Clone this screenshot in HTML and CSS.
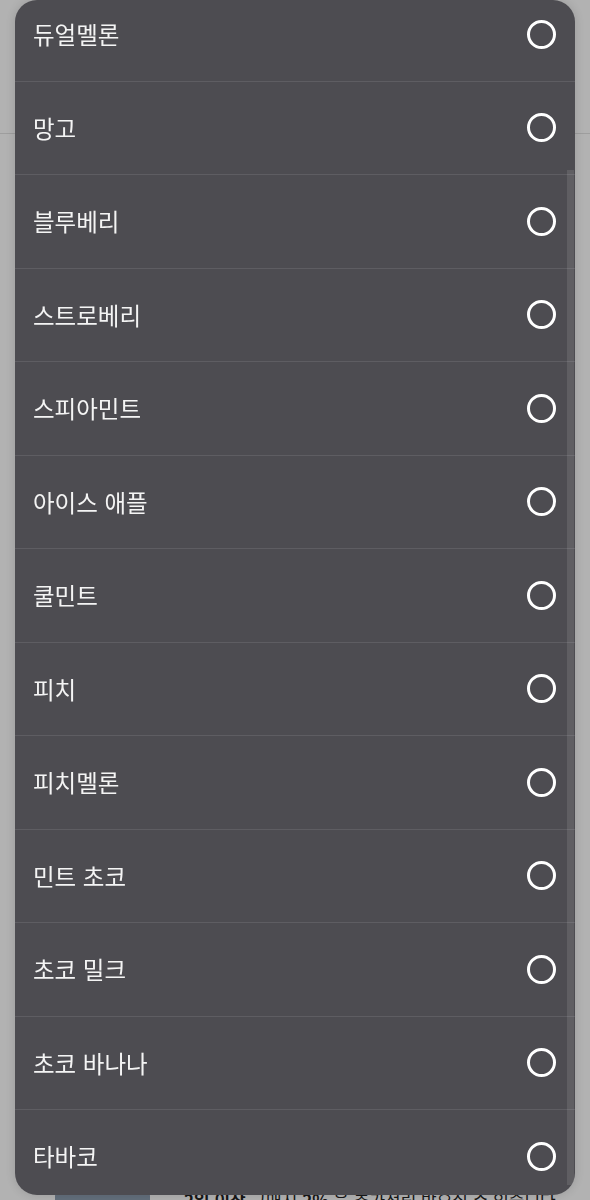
FILE: index.html
```html
<!DOCTYPE html>
<html lang="ko">
<head>
  <meta charset="UTF-8">
  <title>맛 선택</title>
  <link rel="stylesheet" href="styles.css">
</head>
<body>
  <div class="pagina">
    <div class="cabecera"></div>
    <div class="relleno"></div>
    <div class="promo">
      <div class="promo-img"></div>
      <p class="promo-texto"><b>2일 이상</b> 구매시 <b>2%</b> 을 추가적립 받으실 수 있습니다</p>
    </div>
  </div>

  <div class="fondo-oscuro"></div>

  <div class="selector">
    <ul class="lista" id="lista"></ul>
    <div class="barra"></div>
  </div>

  <script>
    const sabores = ["듀얼멜론", "망고", "블루베리", "스트로베리", "스피아민트", "아이스 애플",
      "쿨민트", "피치", "피치멜론", "민트 초코", "초코 밀크", "초코 바나나", "타바코"];
    const lista = document.getElementById("lista");
    sabores.forEach(nombre => {
      const li = document.createElement("li");
      li.className = "opcion";
      li.innerHTML = '<span>' + nombre + '</span><span class="radio"></span>';
      lista.appendChild(li);
    });
  </script>
</body>
</html>
```

FILE: styles.css
```css
body {
  margin: 0;
  background: #fff;
  font-family: "Noto Sans CJK KR", "Noto Sans", sans-serif;
  overflow: hidden;
}

.pagina {
  height: 1200px;
  display: flex;
  flex-direction: column;
}

.cabecera {
  height: 133px;
  border-bottom: 1px solid #e2e2e2;
}

.relleno {
  flex: 1;
}

.promo {
  display: flex;
  align-items: flex-start;
  gap: 34px;
  height: 8px;
  padding-left: 55px;
}

.promo-img {
  width: 95px;
  height: 60px;
  background: #8e9fb2;
  border-radius: 4px;
}

.promo-texto {
  margin: -2px 0 0;
  font-size: 17px;
  line-height: 20px;
  color: #222;
}

.fondo-oscuro {
  position: fixed;
  inset: 0;
  background: rgba(0, 0, 0, 0.3);
}

.selector {
  position: fixed;
  top: 0;
  left: 15px;
  width: 560px;
  height: 1195px;
  background: #4d4c51;
  border-radius: 22px;
  overflow: hidden;
  box-shadow: 0 0 12px rgba(0, 0, 0, 0.15);
}

.lista {
  list-style: none;
  margin: -12px 0 0;
  padding: 0;
}

.opcion {
  height: 92.5px;
  border-bottom: 1px solid #5e5d62;
  display: flex;
  align-items: center;
  justify-content: space-between;
  padding: 0 19px 0 18px;
  color: #f4f4f4;
  font-size: 23.5px;
}

.radio {
  width: 23px;
  height: 23px;
  border: 3px solid #fff;
  border-radius: 50%;
}

.barra {
  position: absolute;
  top: 170px;
  bottom: 10px;
  right: 1px;
  width: 7px;
  background: rgba(255, 255, 255, 0.1);
}
```
